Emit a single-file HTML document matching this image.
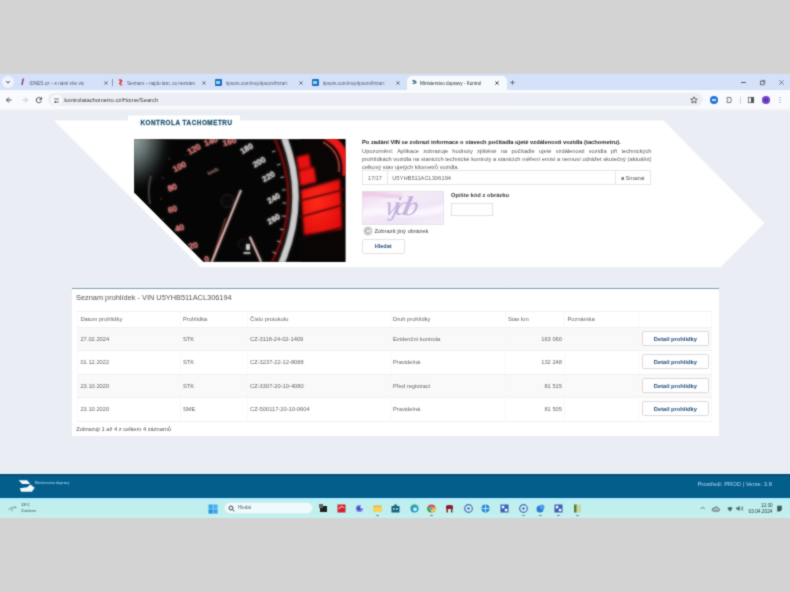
<!DOCTYPE html>
<html><head><meta charset="utf-8">
<style>
*{box-sizing:border-box;margin:0;padding:0}
html,body{width:790px;height:592px;overflow:hidden;background:#d3d3d3;font-family:"Liberation Sans",sans-serif;}
.a{position:absolute}
#tabs{left:0;top:73.5px;width:790px;height:16px;background:#d5e1f8}
#toolbar{left:0;top:89.5px;width:790px;height:19px;background:#f8fafd}
#omni{left:48px;top:93px;width:655px;height:13px;border-radius:7px;background:#eceef5}
#page{left:0;top:108.5px;width:790px;height:365px;background:#eaedf3}
#footer{left:0;top:473.5px;width:790px;height:24.2px;background:linear-gradient(#0c4a6c 0,#0b4f72 1.2px,#05598a 2.2px,#045e8c 3.5px,#045e8c 100%)}
#taskbar{left:0;top:497.7px;width:790px;height:20.1px;background:linear-gradient(#aeeafb 0,#b9edf8 2px,#c1efee 5px,#c1efed 75%,#c4f0f1 90%,#c6eeee 100%)}

#tbl td{border-left:0.5px solid #f7f7f7;border-right:0.5px solid #f7f7f7;border-top:0.5px solid #f0f0f0;border-bottom:0.5px solid #f2f2f2;padding:0.8px 0 0 2px;white-space:nowrap;line-height:1}
#tbl tr.r{height:23.5px;background:#fff}
#tbl tr.o{background:#f9f9f9}
#tbl td.n{text-align:right;padding-right:2.5px}
.btn{display:inline-block;position:relative;top:-1.2px;margin-left:0.7px;width:67.5px;height:15px;line-height:14px;text-align:center;border:0.5px solid #d9d9d9;border-radius:1.5px;background:#fff;color:#1d4c78;font-weight:bold;font-size:5.75px}
.t{white-space:nowrap;line-height:1}
</style></head><body>
<svg width="0" height="0" style="position:absolute"><filter id="soft" x="0" y="0" width="100%" height="100%" color-interpolation-filters="sRGB"><feConvolveMatrix order="3" kernelMatrix="1 2 1 2 12 2 1 2 1" divisor="24" edgeMode="duplicate"/></filter></svg>
<div id="root" style="position:absolute;left:0;top:0;width:790px;height:592px;overflow:hidden;filter:url(#soft)">
<div class="a" id="tabs"></div>
<div class="a" id="toolbar"></div>
<div class="a" id="omni"></div>
<div class="a" id="page"></div>
<div class="a" style="left:0;top:108.5px;width:790px;height:3px;background:linear-gradient(#f1f3f6,#eaedf3)"></div>

<!-- tab strip content -->
<div class="a" style="left:2px;top:76px;width:11.5px;height:11.5px;border-radius:6px;background:#eef3fd"></div>
<svg class="a" style="left:5px;top:79px" width="6" height="6"><path d="M1.2 2.2 L3 4 L4.8 2.2" stroke="#3c4043" stroke-width="1" fill="none"/></svg>
<!-- tab1 -->
<svg class="a" style="left:20px;top:78px" width="5" height="8"><path d="M3.2 0.8 L2 7" stroke="#6b2a7a" stroke-width="1.3"/><circle cx="3.4" cy="1.3" r="0.8" fill="#d0306a"/></svg>
<div class="a t" style="left:29.5px;top:81.8px;font-size:4.67px;color:#4f5a6c">iDNES.cz – s námi víte víc</div>
<svg class="a" style="left:102.5px;top:79.8px" width="6" height="6"><path d="M1.3 1.3L4.7 4.7M4.7 1.3L1.3 4.7" stroke="#50555c" stroke-width="0.75"/></svg>
<div class="a" style="left:112px;top:78.5px;width:0.6px;height:7px;background:#8c97ad"></div>
<!-- tab2 -->
<svg class="a" style="left:117px;top:79px" width="7" height="7"><path d="M2 1.2 C4.5 0.8 5.5 2.2 3.5 3.4 C2 4.4 3.5 5.6 5 5.8" stroke="#d8322a" stroke-width="1.5" fill="none"/><circle cx="5.2" cy="5.6" r="0.9" fill="#f4a0a0"/></svg>
<div class="a t" style="left:127px;top:81.8px;font-size:4.65px;color:#4f5a6c">Seznam – najdu tam, co neznám</div>
<svg class="a" style="left:200.5px;top:79.8px" width="6" height="6"><path d="M1.3 1.3L4.7 4.7M4.7 1.3L1.3 4.7" stroke="#50555c" stroke-width="0.75"/></svg>
<!-- tab3 -->
<div class="a" style="left:214.5px;top:78.5px;width:7px;height:7px;background:#1f6fc0;border-radius:1px"></div>
<div class="a" style="left:216px;top:80.5px;width:4px;height:3px;background:#9fd0f5"></div>
<div class="a t" style="left:226px;top:81.8px;font-size:4.65px;color:#4f5a6c">itpsors.com/muj-itpsors/hrzani</div>
<div class="a" style="left:284px;top:77px;width:8px;height:10px;background:linear-gradient(90deg,rgba(213,225,248,0),#d5e1f8)"></div>
<svg class="a" style="left:297.5px;top:79.8px" width="6" height="6"><path d="M1.3 1.3L4.7 4.7M4.7 1.3L1.3 4.7" stroke="#50555c" stroke-width="0.75"/></svg>
<!-- tab4 -->
<div class="a" style="left:311.5px;top:78.5px;width:7px;height:7px;background:#1f6fc0;border-radius:1px"></div>
<div class="a" style="left:313px;top:80.5px;width:4px;height:3px;background:#9fd0f5"></div>
<div class="a t" style="left:323px;top:81.8px;font-size:4.65px;color:#4f5a6c">itpsors.com/muj-itpsors/hrzani</div>
<div class="a" style="left:381px;top:77px;width:8px;height:10px;background:linear-gradient(90deg,rgba(213,225,248,0),#d5e1f8)"></div>
<svg class="a" style="left:395px;top:79.8px" width="6" height="6"><path d="M1.3 1.3L4.7 4.7M4.7 1.3L1.3 4.7" stroke="#50555c" stroke-width="0.75"/></svg>
<!-- active tab -->
<div class="a" style="left:407px;top:75.8px;width:100px;height:14.5px;background:#f6fafc;border-radius:5px 5px 0 0"></div>
<svg class="a" style="left:411px;top:78.5px" width="7" height="6"><path d="M0.8 1.2 L4 1.2 L5.8 3.2 L4.3 4.8 L1 4.8 L2.8 3.2Z" fill="#2a5a70"/><path d="M1.5 3.2H4.5" stroke="#f6fafc" stroke-width="0.6"/></svg>
<div class="a t" style="left:420px;top:81.8px;font-size:4.65px;color:#1f2a3a">Ministerstvo dopravy - Kontrol</div>
<div class="a" style="left:480px;top:77px;width:8px;height:10px;background:linear-gradient(90deg,rgba(248,250,253,0),#f8fafd)"></div>
<svg class="a" style="left:494px;top:79.8px" width="6" height="6"><path d="M1.3 1.3L4.7 4.7M4.7 1.3L1.3 4.7" stroke="#2a2a2a" stroke-width="0.8"/></svg>
<svg class="a" style="left:509px;top:79px" width="7" height="7"><path d="M3.5 1.3V5.7M1.3 3.5H5.7" stroke="#50555c" stroke-width="0.8"/></svg>
<!-- window controls -->
<div class="a" style="left:741px;top:81.8px;width:4.5px;height:0.6px;background:#5a5f66"></div>
<svg class="a" style="left:758.5px;top:79px" width="7" height="7"><rect x="1.4" y="2.2" width="3.6" height="3.6" stroke="#4a4f55" stroke-width="0.7" fill="none"/><path d="M2.4 1.4H5.8V4.8" stroke="#4a4f55" stroke-width="0.6" fill="none"/></svg>
<svg class="a" style="left:777.5px;top:79px" width="7" height="7"><path d="M1.3 1.3L5.7 5.7M5.7 1.3L1.3 5.7" stroke="#4a4f55" stroke-width="0.7"/></svg>

<!-- toolbar content -->
<svg class="a" style="left:5px;top:96px" width="8" height="8"><path d="M6.5 4H1.5M4 1.5L1.5 4L4 6.5" stroke="#474747" stroke-width="1" fill="none"/></svg>
<svg class="a" style="left:20.5px;top:96px" width="8" height="8"><path d="M1.5 4H6.5M4 1.5L6.5 4L4 6.5" stroke="#c4c7cc" stroke-width="1" fill="none"/></svg>
<svg class="a" style="left:35px;top:96px" width="8" height="8"><path d="M6.3 3.2 A2.6 2.6 0 1 0 6.3 5" stroke="#474747" stroke-width="1" fill="none"/><path d="M6.5 1.2V3.5H4.3" stroke="#474747" stroke-width="0.9" fill="none"/></svg>
<div class="a" style="left:51px;top:94.5px;width:10.5px;height:10.5px;border-radius:6px;background:#f8fafd"></div>
<svg class="a" style="left:53px;top:96.5px" width="7" height="7"><path d="M1 2H4M1 5H6M5 1V3M2.5 4V6" stroke="#474747" stroke-width="0.8"/></svg>
<div class="a t" style="left:64.3px;top:97.8px;font-size:5.79px;color:#3a3a3a">kontrolatachometru.cz/Home/Search</div>
<svg class="a" style="left:689.5px;top:96px" width="8" height="8"><path d="M4 0.8L5 3L7.3 3.2L5.5 4.7L6.1 7L4 5.8L1.9 7L2.5 4.7L0.7 3.2L3 3Z" stroke="#474747" stroke-width="0.8" fill="none"/></svg>
<div class="a" style="left:710.3px;top:96.3px;width:7.4px;height:7.4px;border-radius:3.7px;background:#2475d8"></div>
<div class="a" style="left:712.3px;top:98.6px;width:3.4px;height:2.8px;border-radius:0.8px;background:#dbe9fb"></div>
<svg class="a" style="left:725px;top:96px" width="8" height="8"><path d="M2 1.5H5.8V3A0.9 0.9 0 0 1 5.8 4.8V6.5H2V4.8A0.9 0.9 0 0 0 2 3Z" stroke="#5a5f66" stroke-width="0.75" fill="none"/></svg>
<div class="a" style="left:740px;top:96.5px;width:0.6px;height:7px;background:#cdd0d6"></div>
<svg class="a" style="left:747px;top:96px" width="8" height="8"><rect x="1.3" y="1.3" width="5.4" height="5.4" stroke="#4a4f55" stroke-width="0.7" fill="none"/><rect x="4" y="1.3" width="2.7" height="5.4" fill="#4a4f55"/></svg>
<div class="a" style="left:762.2px;top:96.2px;width:7.6px;height:7.6px;border-radius:3.8px;background:#7447c9"></div>
<div class="a" style="left:763.7px;top:97.7px;width:4.6px;height:4.6px;border-radius:2.3px;background:#5a34b0"></div>
<svg class="a" style="left:778px;top:96px" width="4" height="8"><circle cx="2" cy="1.6" r="0.5" fill="#5a5f66"/><circle cx="2" cy="4" r="0.5" fill="#5a5f66"/><circle cx="2" cy="6.4" r="0.5" fill="#5a5f66"/></svg>


<!-- white arrow shape -->
<svg class="a" style="left:0;top:0" width="790" height="592">
  <polygon points="54,120.5 663.5,120.5 764.5,223 720.5,267.2 200.8,267.2" fill="#ffffff"/>
  <rect x="128" y="115.5" width="112" height="6" fill="#ffffff"/>
</svg>

<!-- speedometer image -->
<svg class="a" style="left:0;top:0" width="790" height="592">
<defs>
 <clipPath id="imgclip"><polygon points="134.2,139.2 345.3,139.2 345.3,261.7 203.3,261.7 134.2,192.6"/></clipPath>
 <radialGradient id="tl" cx="132" cy="137" r="56" gradientUnits="userSpaceOnUse" gradientTransform="translate(132 137) scale(0.75 1.05) translate(-132 -137)"><stop offset="0" stop-color="#a0aeae"/><stop offset="0.35" stop-color="#6a7676"/><stop offset="0.7" stop-color="#252a2a"/><stop offset="1" stop-color="#060606" stop-opacity="0"/></radialGradient>
 <radialGradient id="redglow" cx="0.4" cy="0.4" r="0.7"><stop offset="0" stop-color="#ff2a1a"/><stop offset="1" stop-color="#e00c0c"/></radialGradient>
 <filter id="bl" x="-5%" y="-5%" width="110%" height="110%"><feGaussianBlur stdDeviation="0.7"/></filter>
 <filter id="bl2" x="-20%" y="-20%" width="140%" height="140%"><feGaussianBlur stdDeviation="1.2"/></filter>
</defs>
<g clip-path="url(#imgclip)">
<g id="spd">
 <rect x="130" y="135" width="220" height="130" fill="#060606"/>
 <rect x="130" y="135" width="80" height="85" fill="url(#tl)"/>
 <path d="M151 176 Q147 190 150 204" stroke="#5a5a5a" stroke-width="1.4" fill="none"/>
 <path d="M284 137 Q308.5 201 281 264" stroke="#cfcfcf" stroke-width="6.5" fill="none"/>
 <path d="M279.5 137 Q303 201 276.5 264" stroke="#2a1a1a" stroke-width="1.2" fill="none"/>
 <path d="M274 137 Q304 201 271 264" stroke="#6a0c0c" stroke-width="3" fill="none"/>
 <g fill="#e89494" stroke="#d87070" stroke-width="0.5" font-family="Liberation Sans" font-weight="bold" font-size="8.4" text-anchor="middle"><text x="206.8" y="262.1" transform="rotate(-10 206.8 259.6)">0</text><text x="193.3" y="248.5" transform="rotate(-15 193.3 246)">20</text><text x="179.7" y="230.9" transform="rotate(-15 179.7 228.4)">40</text><text x="172.5" y="212.2" transform="rotate(-15 172.5 209.7)">60</text><text x="172.5" y="190.4" transform="rotate(-20 172.5 187.9)">80</text><text x="179.7" y="169.5" transform="rotate(-25 179.7 167)">100</text><text x="194.3" y="151.9" transform="rotate(-30 194.3 149.4)">120</text><text x="211" y="144.0" transform="rotate(-20 211 141.5)">140</text><text x="229.6" y="144.5" transform="rotate(-15 229.6 142)">160</text></g>
 <g fill="#f0eaea" stroke="#d8d0d0" stroke-width="0.4" font-family="Liberation Sans" font-weight="bold" font-size="8" text-anchor="middle"><text x="246.6" y="151.20000000000002" transform="rotate(-30 246.6 148.4)">180</text><text x="259.1" y="164.70000000000002" transform="rotate(-30 259.1 161.9)">200</text><text x="268.5" y="179.20000000000002" transform="rotate(-30 268.5 176.4)">220</text><text x="273.7" y="201.10000000000002" transform="rotate(-30 273.7 198.3)">240</text><text x="273.7" y="221.8" transform="rotate(-30 273.7 219)">260</text></g>
 <text x="213" y="173" fill="#d49090" font-family="Liberation Sans" font-weight="bold" font-size="5" text-anchor="middle" transform="rotate(-25 213 171)">km/h</text>
 <g fill="#9a4a4a"><circle cx="169.3" cy="158.8" r="0.8"/><circle cx="163" cy="178" r="0.8"/><circle cx="161" cy="199" r="0.8"/><circle cx="163" cy="219" r="0.8"/><circle cx="186" cy="155" r="0.6"/></g>
 <g stroke="#e8e8e8" stroke-width="0.9">
  <path d="M272 152l3.5 -1.2M277 165l3.5 -0.8M280.5 177.5l3.5 -0.5M282 190l3.5 -0.2M282.5 203l3.5 0M282 216l3.5 0.3M280 229l3.5 0.6M277 241l3.5 1M272.5 252l3.5 1.4"/>
 </g>
 <circle cx="227.5" cy="201" r="6.5" fill="#0a0a0a" stroke="#2a2a2a" stroke-width="1"/>
 <path d="M225.5 218 L211 264" stroke="#c04848" stroke-width="0.9"/>
 <path d="M241 190 L211 264" stroke="#f5cac6" stroke-width="2.1"/>
 <circle cx="243" cy="244" r="5" fill="#0a0a0a" stroke="#222" stroke-width="0.8"/>
 <path d="M249.8 236.7 L261.2 262" stroke="#f5cac6" stroke-width="2.1"/>
 <path d="M246 244h4v6h-4z" fill="#dddddd"/>
 <rect x="243.5" y="252" width="7" height="2" fill="#cfcfcf"/>
 <rect x="301" y="139" width="45" height="123" fill="#0b0606"/>
 <path d="M326 136 Q349 147 346 176" stroke="#f01818" stroke-width="7.5" fill="none"/>
 <path d="M323 142 Q341 152 339 172" stroke="#ff6050" stroke-width="1.2" fill="none"/>
 <g style="filter:blur(1.2px)">
 <path d="M296.5 157 L309 154 L311 167 L298.5 170Z" fill="#e81212"/>
 <path d="M298.6 171 L314 167 L316.3 182 L300.5 186Z" fill="#f01616"/>
 <path d="M301 190 L340 179 L342 229 L304 235Z" fill="url(#redglow)"/>
 </g>
 <path d="M298 240 L345 226" stroke="#2a0808" stroke-width="1"/>
 <path d="M299 201 L346 189M300 217 L346 204" stroke="#5a0606" stroke-width="2.2" opacity="0.8"/>
</g>
<use href="#spd" style="filter:blur(0.8px);opacity:0.55"/>
</g>
</svg>

<div class="a t" style="left:140.4px;top:119.6px;font-size:6.3px;letter-spacing:0.56px;font-weight:bold;color:#235a78;-webkit-text-stroke:0.3px #235a78">KONTROLA TACHOMETRU</div>


<!-- right column -->
<div class="a t" style="left:362px;top:140px;font-size:5.75px;font-weight:bold;color:#1e1e1e">Po zadání VIN se zobrazí informace o stavech počítadla ujeté vzdálenosti vozidla (tachometru).</div>
<div class="a" id="p1" style="left:362px;top:146.8px;width:289.5px;font-size:5.75px;line-height:8.02px;color:#5a5a5a;text-align:justify">
<span style="display:block;text-align-last:justify">Upozornění: Aplikace zobrazuje hodnoty zjištěné na počítadle ujeté vzdálenosti vozidla při technických</span>
<span style="display:block;text-align-last:justify">prohlídkách vozidla na stanicích technické kontroly a stanicích měření emisí a nemusí odrážet skutečný (aktuální)</span>
<span style="display:block">celkový stav ujetých kilometrů vozidla.</span>
</div>
<!-- input group -->
<div class="a" style="left:361.8px;top:170.4px;width:289px;height:14.3px;border:0.6px solid #e6e6e6;background:#fff"></div>
<div class="a" style="left:387.4px;top:170.4px;width:0.6px;height:14.3px;background:#e6e6e6"></div>
<div class="a t" style="left:368.1px;top:176.4px;font-size:5.48px;color:#666">17/17</div>
<div class="a t" style="left:392.2px;top:176.3px;font-size:5.78px;color:#666">U5YHB511ACL306194</div>
<div class="a" style="left:615px;top:170.4px;width:0.6px;height:14.3px;background:#e6e6e6"></div>
<div class="a t" style="left:620.8px;top:176px;font-size:5.7px;color:#555"><b style="font-size:4.3px;position:relative;top:-0.3px">✖</b> Smazat</div>
<!-- captcha -->
<svg class="a" style="left:362px;top:191.2px" width="82" height="34">
<defs>
<linearGradient id="cg" x1="0" y1="0" x2="1" y2="1"><stop offset="0" stop-color="#f1d3ea"/><stop offset="0.3" stop-color="#f5edf8"/><stop offset="0.7" stop-color="#efe4f5"/><stop offset="1" stop-color="#f6f0f9"/></linearGradient>
<filter id="cb"><feGaussianBlur stdDeviation="1.5"/></filter>
</defs>
<rect x="0" y="0" width="82" height="34" fill="url(#cg)"/>
<path d="M-5 22 C20 8 45 30 90 10 L90 18 C45 36 20 14 -5 30Z" fill="#fbf6fd" filter="url(#cb)"/>
<path d="M0 3 C15 0 25 8 40 5" stroke="#efc8e4" stroke-width="4" fill="none" filter="url(#cb)"/>
<text x="27" y="24" font-family="Liberation Serif" font-style="italic" font-size="27" fill="#c4b2e0" letter-spacing="-4.5" transform="skewX(-12)">vjdb</text>
<rect x="0.3" y="0.3" width="81.4" height="33.4" fill="none" stroke="#e2dae6" stroke-width="0.6"/>
</svg>
<div class="a t" style="left:451px;top:192.8px;font-size:5.77px;font-weight:bold;color:#3a3a3a">Opište kód z obrázku</div>
<div class="a" style="left:451px;top:202.7px;width:41.5px;height:13.6px;border:0.6px solid #e2e2e2;background:#fff"></div>
<svg class="a" style="left:362.5px;top:226px" width="10" height="10"><circle cx="5" cy="5" r="4" fill="#eee" stroke="#999" stroke-width="0.6"/><path d="M7 4.3A2.2 2.2 0 1 0 7 5.7" stroke="#666" stroke-width="0.7" fill="none"/></svg>
<div class="a t" style="left:374.5px;top:229px;font-size:5.85px;color:#444">Zobrazit jiný obrázek</div>
<div class="a" style="left:362px;top:238.8px;width:42.5px;height:15.2px;border:0.6px solid #e2e2e2;border-radius:1.5px;background:#fff"></div>
<div class="a t" style="left:374.8px;top:243.6px;font-size:5.5px;font-weight:bold;color:#24527a">Hledat</div>

<!-- panel -->
<div class="a" style="left:71.8px;top:283.5px;width:647px;height:4px;background:linear-gradient(#eaedf3,#e6f2f8)"></div>
<div class="a" style="left:71.8px;top:287.6px;width:647px;height:148.2px;background:#fff;border-top:1.9px solid #819eac"></div>
<div class="a t" style="left:76px;top:293.9px;font-size:7.39px;color:#555">Seznam prohlídek - VIN U5YHB511ACL306194</div>
<table class="a" id="tbl" style="left:77.4px;top:310.6px;width:635px;border-collapse:collapse;font-size:5.75px;color:#666">
<colgroup><col style="width:102.6px"><col style="width:67px"><col style="width:143px"><col style="width:115px"><col style="width:59.5px"><col style="width:73.5px"><col></colgroup>
<tr style="height:16.4px;background:#fff"><td>Datum prohlídky</td><td>Prohlídka</td><td>Číslo protokolu</td><td>Druh prohlídky</td><td>Stav km</td><td>Poznámka</td><td></td></tr>
<tr class="r o"><td>27.02.2024</td><td>STK</td><td>CZ-3118-24-02-1409</td><td>Evidenční kontrola</td><td class="n">163 060</td><td></td><td><span class="btn">Detail prohlídky</span></td></tr>
<tr class="r"><td>01.12.2022</td><td>STK</td><td>CZ-3237-22-12-8088</td><td>Pravidelná</td><td class="n">132 248</td><td></td><td><span class="btn">Detail prohlídky</span></td></tr>
<tr class="r o"><td>23.10.2020</td><td>STK</td><td>CZ-3307-20-10-4080</td><td>Před registrací</td><td class="n">81 515</td><td></td><td><span class="btn">Detail prohlídky</span></td></tr>
<tr class="r"><td>23.10.2020</td><td>SME</td><td>CZ-500117-20-10-0604</td><td>Pravidelná</td><td class="n">81 505</td><td></td><td><span class="btn">Detail prohlídky</span></td></tr>
</table>
<div class="a t" style="left:76.3px;top:426.6px;font-size:5.74px;color:#555">Zobrazuji 1 až 4 z celkem 4 záznamů</div>

<div class="a" style="left:0;top:470px;width:790px;height:3.5px;background:linear-gradient(#eaedf3,#e2f1fb)"></div>
<div class="a" id="footer"></div>
<div class="a" id="taskbar"></div>

<!-- footer content -->
<svg class="a" style="left:0;top:470px" width="80" height="30">
  <polygon points="18.6,10.3 27.2,10.3 30.3,14 22.2,14" fill="#f2f8fc"/>
  <polygon points="19.8,18.3 27.2,17.3 30.4,14.5 34.7,17.8 31.9,21.8 21.1,21.8" fill="#f2f8fc"/>
</svg>
<div class="a t" style="left:34.8px;top:482.2px;font-size:3.45px;font-weight:bold;color:#8fc3e6">Ministerstvo dopravy</div>
<div class="a t" style="left:697.4px;top:481.9px;font-size:5.82px;color:#b3daf4">Prostředí: PROD | Verze: 3.8</div>

<!-- taskbar content -->
<svg class="a" style="left:7px;top:503px" width="12" height="10"><path d="M1.5 6H5.5M4 4.5C6 4 7 5.5 9.5 4.5M7.5 2.8L8.3 4.3M5.5 7.2L4.8 8.4" stroke="#6a8088" stroke-width="0.8" fill="none"/></svg>
<div class="a t" style="left:21px;top:503.2px;font-size:4px;color:#1b2a30">13°C</div>
<div class="a t" style="left:21.3px;top:509.6px;font-size:3.5px;color:#3a4e56">Zataženo</div>

<svg class="a" style="left:208px;top:503.5px" width="10" height="10"><rect x="0.5" y="0.5" width="4.3" height="4.3" fill="#3aa6ee"/><rect x="5.3" y="0.5" width="4.3" height="4.3" fill="#4ab2f4"/><rect x="0.5" y="5.3" width="4.3" height="4.3" fill="#2a92dc"/><rect x="5.3" y="5.3" width="4.3" height="4.3" fill="#3aa2ea"/></svg>
<div class="a" style="left:224px;top:502px;width:89px;height:12px;border-radius:6px;background:#eefafb;border:0.5px solid #d7ecef"></div>
<svg class="a" style="left:227.5px;top:505px" width="7" height="7"><circle cx="3" cy="3" r="2" stroke="#333" stroke-width="0.9" fill="none"/><path d="M4.5 4.5L6.3 6.3" stroke="#333" stroke-width="1"/></svg>
<div class="a t" style="left:237.8px;top:506.4px;font-size:4.6px;color:#5c6a70">Hledat</div>
<svg class="a" style="left:318.5px;top:503.5px" width="9" height="9"><rect x="1" y="2" width="7" height="6" fill="#202020"/><rect x="0" y="0" width="4" height="4" fill="#666"/></svg>
<svg class="a" style="left:336.5px;top:503.5px" width="9" height="9"><rect x="0.5" y="0.5" width="8" height="8" fill="#d42030"/><path d="M2 5 C3 2 6 2 7 4" stroke="#fff" stroke-width="1" fill="none"/></svg>
<svg class="a" style="left:354.5px;top:503.5px" width="9" height="9"><circle cx="4.5" cy="4.5" r="3.6" fill="#7b83eb"/><rect x="2" y="2.5" width="3.5" height="4" fill="#4b53bc"/><circle cx="6.8" cy="3" r="1.4" fill="#e8eaff"/></svg>
<svg class="a" style="left:372.5px;top:503.5px" width="9" height="9"><rect x="0.5" y="1.5" width="8" height="6.5" fill="#e8b830"/><rect x="0.5" y="3" width="8" height="5" fill="#f7d25a"/></svg>
<svg class="a" style="left:391.4px;top:503.5px" width="9" height="9"><rect x="0.5" y="2" width="8" height="6.5" fill="#1f5f7a"/><rect x="3" y="0.5" width="3" height="2" fill="#2a6f8a"/><rect x="2" y="4" width="2" height="2" fill="#6fc0e0"/><rect x="5" y="4" width="2" height="2" fill="#6fc0e0"/></svg>
<svg class="a" style="left:409.5px;top:503.5px" width="9" height="9"><circle cx="4.5" cy="4.5" r="4" fill="#1d8fd0"/><circle cx="5" cy="5.3" r="2" fill="#c7ecf0"/><path d="M1 5 A3.5 3.5 0 0 1 8 4" stroke="#46c86e" stroke-width="1.2" fill="none"/></svg>
<svg class="a" style="left:427.0px;top:503.5px" width="9" height="9"><circle cx="4.5" cy="4.5" r="4" fill="#e04a3a"/><path d="M4.5 4.5 L8.3 3.2 A4 4 0 0 1 3.5 8.4Z" fill="#f2c230"/><path d="M4.5 4.5 L3.5 8.4 A4 4 0 0 1 0.7 2.5Z" fill="#35a852"/><circle cx="4.5" cy="4.5" r="1.8" fill="#fff"/><circle cx="4.5" cy="4.5" r="1.3" fill="#2a7de1"/></svg>
<svg class="a" style="left:445.1px;top:503.5px" width="9" height="9"><path d="M1 2 C1 0.5 8 0.5 8 2 V5 H1Z" fill="#8a2030"/><rect x="1.5" y="5" width="1.5" height="3.5" fill="#8a2030"/><rect x="6" y="5" width="1.5" height="3.5" fill="#8a2030"/></svg>
<svg class="a" style="left:464.1px;top:503.5px" width="9" height="9"><circle cx="4.5" cy="4.5" r="3.8" fill="#e8eef5" stroke="#2a70b8" stroke-width="1.2"/><circle cx="4.5" cy="4.5" r="1.3" fill="#2a70b8"/></svg>
<svg class="a" style="left:481.3px;top:503.5px" width="9" height="9"><circle cx="4.5" cy="4.5" r="4" fill="#2488d8"/><path d="M1 4.5H8M4.5 1V8" stroke="#e0f0ff" stroke-width="0.8"/></svg>
<svg class="a" style="left:499.5px;top:503.5px" width="9" height="9"><rect x="0.5" y="0.5" width="8" height="8" fill="#3a5fb8"/><rect x="1.8" y="1.8" width="2.5" height="2.5" fill="#fff"/><rect x="4.8" y="4.8" width="2.5" height="2.5" fill="#fff"/></svg>
<svg class="a" style="left:519.0px;top:503.5px" width="9" height="9"><circle cx="4.5" cy="4.5" r="3.8" fill="#e8eef5" stroke="#2a70b8" stroke-width="1.2"/><circle cx="4.5" cy="4.5" r="1.3" fill="#2a70b8"/></svg>
<svg class="a" style="left:535.5px;top:503.5px" width="9" height="9"><circle cx="4" cy="5" r="3.5" fill="#2a7ad0"/><circle cx="6" cy="3" r="2.5" fill="#4aa0e8"/></svg>
<svg class="a" style="left:553.5px;top:503.5px" width="9" height="9"><rect x="0.5" y="0.5" width="8" height="8" fill="#3a5fb8"/><rect x="1.8" y="1.8" width="2.5" height="2.5" fill="#fff"/><rect x="4.8" y="4.8" width="2.5" height="2.5" fill="#fff"/></svg>
<svg class="a" style="left:573.3px;top:503.5px" width="9" height="9"><rect x="1" y="0.5" width="7" height="8" fill="#c8d8a0"/><rect x="1" y="0.5" width="2.5" height="8" fill="#5a7a40"/></svg>
<div class="a" style="left:375.5px;top:515.2px;width:3px;height:0.8px;border-radius:1px;background:#6d8a90"></div>
<div class="a" style="left:430.0px;top:515.2px;width:3px;height:0.8px;border-radius:1px;background:#6d8a90"></div>
<div class="a" style="left:522.0px;top:515.2px;width:3px;height:0.8px;border-radius:1px;background:#6d8a90"></div>
<div class="a" style="left:538.5px;top:515.2px;width:3px;height:0.8px;border-radius:1px;background:#6d8a90"></div>
<div class="a" style="left:556.5px;top:515.2px;width:3px;height:0.8px;border-radius:1px;background:#6d8a90"></div>
<div class="a" style="left:576.3px;top:515.2px;width:3px;height:0.8px;border-radius:1px;background:#6d8a90"></div>

<svg class="a" style="left:699px;top:505px" width="8" height="6"><path d="M1.8 4L3.8 2L5.8 4" stroke="#46555c" stroke-width="0.7" fill="none"/></svg>
<svg class="a" style="left:711px;top:504.5px" width="10" height="8"><path d="M2.2 6.2H7.6A1.5 1.5 0 0 0 7.3 3.3A2.1 2.1 0 0 0 3.4 3.1A1.6 1.6 0 0 0 2.2 6.2Z" stroke="#46555c" stroke-width="0.7" fill="#a9b9bc"/></svg>
<svg class="a" style="left:725.5px;top:504.5px" width="8" height="8"><path d="M1.3 3.2A4.2 4.2 0 0 1 6.7 3.2L4 6.4Z" fill="#52636a"/></svg>
<svg class="a" style="left:734.5px;top:504px" width="9" height="9"><path d="M1.2 3.6H2.8L4.6 1.8V7.2L2.8 5.4H1.2Z" fill="#52636a"/><path d="M6.2 3V6M7.6 2.2V6.8" stroke="#52636a" stroke-width="0.65"/></svg>
<div class="a t" style="right:17.5px;top:503.7px;font-size:4.6px;color:#2a3a40;text-align:right">12:30</div>
<div class="a t" style="right:17.5px;top:509.6px;font-size:4.8px;color:#2a3a40;text-align:right">03.04.2024</div>
<svg class="a" style="left:775.5px;top:505px" width="8" height="8"><path d="M1.2 0.8H5.8V4.8L4 6.6H1.2Z" fill="#46555c"/></svg>

</div>
</body></html>
